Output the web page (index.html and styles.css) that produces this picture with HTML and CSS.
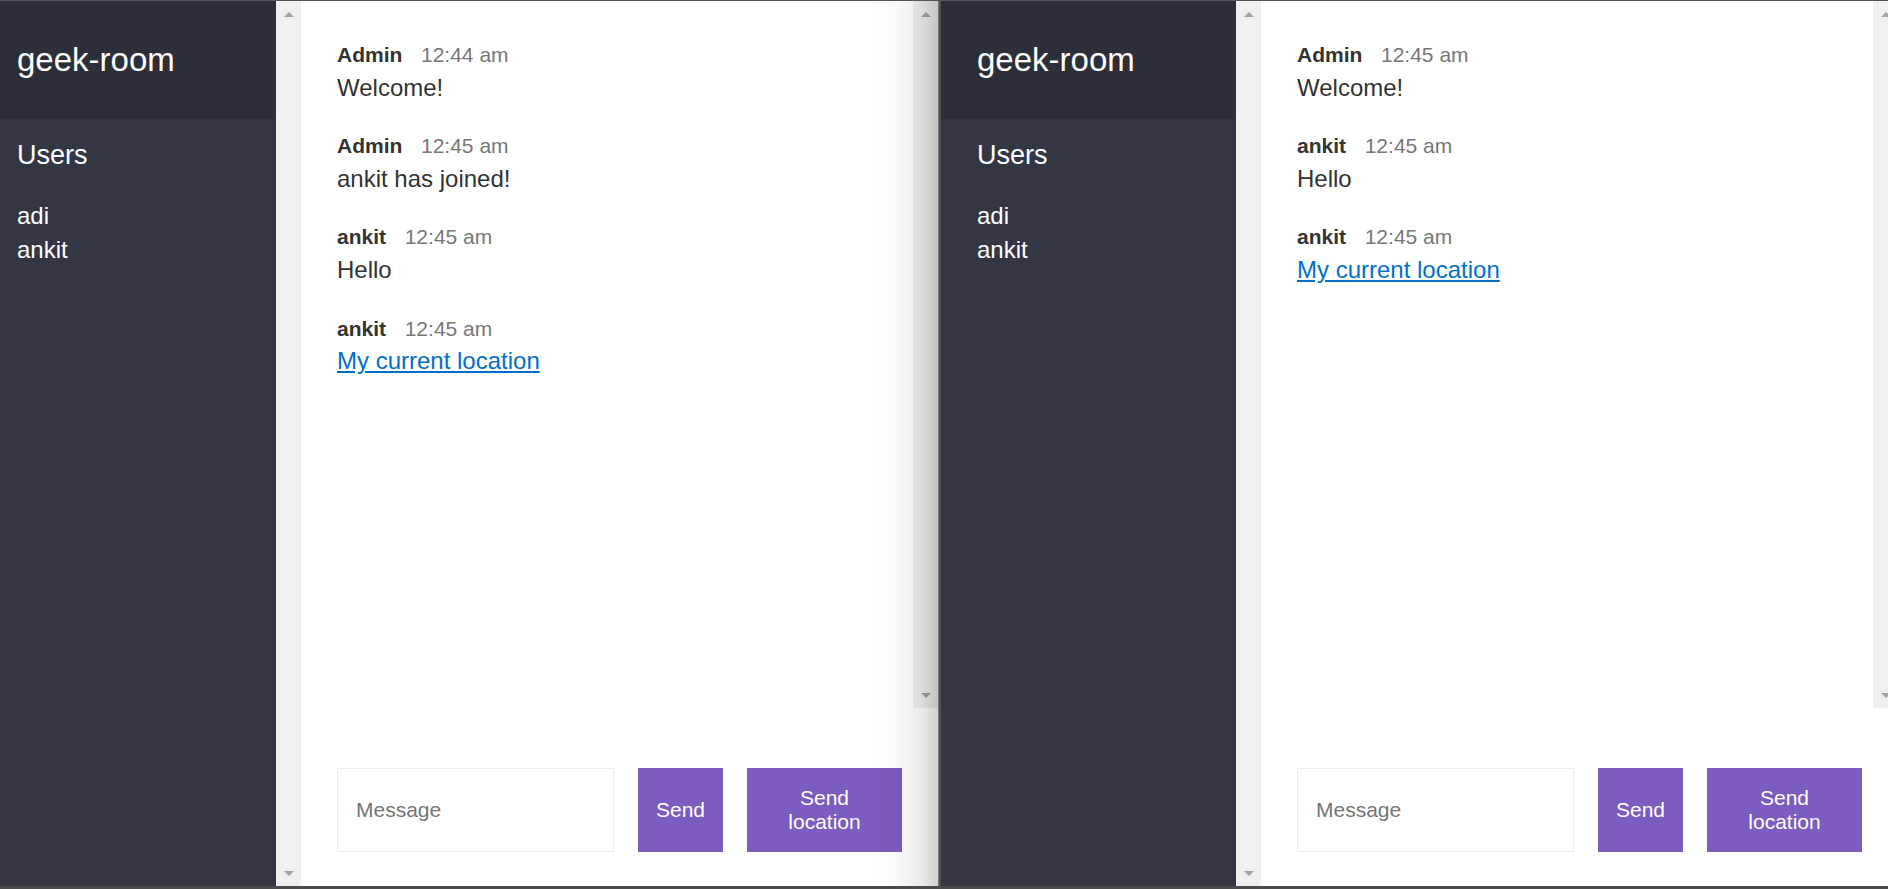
FILE: index.html
```html
<!DOCTYPE html>
<html lang="en">
<head>
<meta charset="utf-8">
<title>geek-room</title>
<link rel="stylesheet" href="styles.css">
</head>
<body>
<div class="screen">
  <div class="topline"></div>
  <div class="desktop">
    <div class="window window--left">
      <aside class="sidebar">
        <div class="sidebar__content">
          <h2 class="room-title">geek-room</h2>
          <h3 class="list-title">Users</h3>
          <ul class="users">
            <li>adi</li>
            <li>ankit</li>
          </ul>
        </div>
        <div class="scrollbar scrollbar--full"><span class="arrow arrow--up"></span><span class="arrow arrow--down"></span></div>
      </aside>
      <main class="chat">
        <div class="chat__top">
          <div class="messages">
            <div class="message">
              <p><span class="message__name">Admin</span> <span class="message__meta">12:44 am</span></p>
              <p>Welcome!</p>
            </div>
            <div class="message">
              <p><span class="message__name">Admin</span> <span class="message__meta">12:45 am</span></p>
              <p>ankit has joined!</p>
            </div>
            <div class="message">
              <p><span class="message__name">ankit</span> <span class="message__meta">12:45 am</span></p>
              <p>Hello</p>
            </div>
            <div class="message">
              <p><span class="message__name">ankit</span> <span class="message__meta">12:45 am</span></p>
              <p><a href="#">My current location</a></p>
            </div>
          </div>
          <div class="scrollbar"><span class="arrow arrow--up"></span><span class="arrow arrow--down"></span></div>
        </div>
        <div class="compose">
          <form class="compose__form">
            <input class="compose__input" type="text" placeholder="Message">
            <button class="btn" type="button">Send</button>
          </form>
          <button class="btn btn--location" type="button">Send location</button>
        </div>
      </main>
      <div class="shade"></div>
    </div>
    <div class="divider"></div>
    <div class="window">
      <aside class="sidebar">
        <div class="sidebar__content">
          <h2 class="room-title">geek-room</h2>
          <h3 class="list-title">Users</h3>
          <ul class="users">
            <li>adi</li>
            <li>ankit</li>
          </ul>
        </div>
        <div class="scrollbar scrollbar--full"><span class="arrow arrow--up"></span><span class="arrow arrow--down"></span></div>
      </aside>
      <main class="chat">
        <div class="chat__top">
          <div class="messages">
            <div class="message">
              <p><span class="message__name">Admin</span> <span class="message__meta">12:45 am</span></p>
              <p>Welcome!</p>
            </div>
            <div class="message">
              <p><span class="message__name">ankit</span> <span class="message__meta">12:45 am</span></p>
              <p>Hello</p>
            </div>
            <div class="message">
              <p><span class="message__name">ankit</span> <span class="message__meta">12:45 am</span></p>
              <p><a href="#">My current location</a></p>
            </div>
          </div>
          <div class="scrollbar"><span class="arrow arrow--up"></span><span class="arrow arrow--down"></span></div>
        </div>
        <div class="compose">
          <form class="compose__form">
            <input class="compose__input" type="text" placeholder="Message">
            <button class="btn" type="button">Send</button>
          </form>
          <button class="btn btn--location" type="button">Send location</button>
        </div>
      </main>
    </div>
  </div>
  <div class="bottomline"></div>
</div>
</body>
</html>
```

FILE: styles.css
```css
* {
  margin: 0;
  padding: 0;
  box-sizing: border-box;
}

html, body {
  width: 1888px;
  height: 889px;
  overflow: hidden;
}

body {
  font-family: "Liberation Sans", Arial, Helvetica, sans-serif;
  font-size: 24px;
  line-height: 1.4;
  color: #333333;
  background: #ffffff;
}

.screen {
  display: flex;
  flex-direction: column;
  width: 1888px;
  height: 889px;
}

.topline {
  height: 1px;
  background: #555555;
  flex-shrink: 0;
}

.bottomline {
  height: 3px;
  background: #4a4a4a;
  flex-shrink: 0;
}

.desktop {
  display: flex;
  height: 885px;
  overflow: hidden;
}

.window {
  position: relative;
  display: flex;
  width: 957px;
  flex-shrink: 0;
  height: 100%;
  background: #ffffff;
}

.window--left {
  margin-left: -19px;
}

.divider {
  width: 3px;
  flex-shrink: 0;
  background: linear-gradient(to right, #7a7a7a 0, #7a7a7a 1px, #505050 1px, #505050 100%);
}

/* sidebar */
.sidebar {
  display: flex;
  width: 320px;
  flex-shrink: 0;
  height: 100%;
}

.sidebar__content {
  flex: 1;
  background: #333744;
  color: #ffffff;
}

.room-title {
  font-weight: 400;
  font-size: 33px;
  line-height: 1.4;
  background: #2c2f3a;
  padding: 36px;
}

.list-title {
  font-weight: 400;
  font-size: 27px;
  line-height: 1.4;
  margin-bottom: 6px;
  padding: 18px 36px 0 36px;
}

.users {
  list-style-type: none;
  font-weight: 400;
  font-size: 24px;
  padding: 18px 36px 0 36px;
}

/* scrollbars */
.scrollbar {
  width: 25px;
  flex-shrink: 0;
  background: #f0f0f0;
  display: flex;
  flex-direction: column;
  justify-content: space-between;
  align-items: center;
  padding: 11px 0 10px 0;
}

.arrow {
  display: block;
  width: 0;
  height: 0;
  border-left: 5px solid transparent;
  border-right: 5px solid transparent;
}

.arrow--up {
  border-bottom: 5px solid #a3a3a3;
}

.arrow--down {
  border-top: 5px solid #a3a3a3;
}

/* chat */
.chat {
  flex: 1;
  display: flex;
  flex-direction: column;
  min-width: 0;
  height: 100%;
}

.chat__top {
  flex: 1;
  display: flex;
  min-height: 0;
}

.messages {
  flex: 1;
  padding: 36px 36px 0 36px;
}

.message {
  margin-bottom: 24px;
}

.message__name {
  font-weight: 700;
  font-size: 21px;
  margin-right: 12px;
}

.message__meta {
  color: #777777;
  font-size: 21px;
}

.message a {
  color: #0070cc;
  text-decoration: underline;
}

/* compose */
.compose {
  display: flex;
  flex-shrink: 0;
  margin-top: 24px;
  padding: 36px 36px 34px 36px;
}

.compose__form {
  display: flex;
  flex: 1 1 0;
  min-width: 0;
  margin-right: 24px;
}

.compose__input {
  flex: 1 1 0;
  width: 0;
  min-width: 0;
  border: 1px solid #eeeeee;
  padding: 18px;
  margin-right: 24px;
  font-family: "Liberation Sans", Arial, Helvetica, sans-serif;
  font-size: 21px;
  color: #333333;
  outline: none;
  background: #ffffff;
}

.compose__input::placeholder {
  color: #757575;
}

.btn {
  padding: 18px;
  background: #7c5cbf;
  border: none;
  color: #ffffff;
  font-family: "Liberation Sans", Arial, Helvetica, sans-serif;
  font-size: 21px;
  line-height: 1.15;
  flex-shrink: 0;
}

.btn--location {
  width: 155px;
}

.shade {
  position: absolute;
  top: 0;
  bottom: 0;
  right: 0;
  width: 70px;
  pointer-events: none;
  background: linear-gradient(to right, rgba(0,0,0,0) 0%, rgba(0,0,0,0.02) 40%, rgba(0,0,0,0.08) 75%, rgba(0,0,0,0.18) 100%);
}
```
